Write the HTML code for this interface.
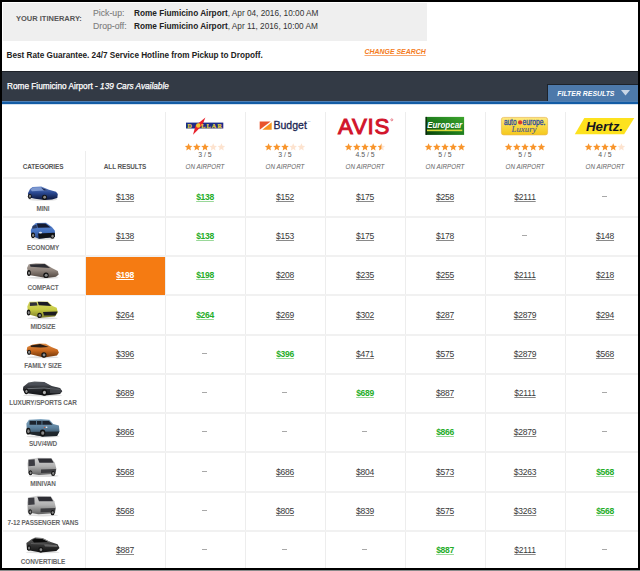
<!DOCTYPE html><html><head><meta charset="utf-8"><style>html,body{margin:0;padding:0;width:640px;height:571px;overflow:hidden;background:#fff}</style></head><body><div style="position:absolute;left:0px;top:0px;width:640px;height:571px;background:#8a8a8a;"></div>
<div style="position:absolute;left:0px;top:0px;width:640px;height:570px;background:#000;"></div>
<div style="position:absolute;left:2px;top:2px;width:636px;height:566px;background:#fff;"></div>
<div style="position:absolute;left:3px;top:3px;width:424px;height:37.5px;background:#efefef;"></div>
<div style="position:absolute;left:16.00px;top:15.00px;font:normal bold 7.5px/1 'Liberation Sans', sans-serif;color:#555;white-space:nowrap;">YOUR ITINERARY:</div>
<div style="position:absolute;left:93.00px;top:8.98px;font:normal normal 8.7px/1 'Liberation Sans', sans-serif;color:#7c7c7c;white-space:nowrap;-webkit-text-stroke:0.1px #7c7c7c;">Pick-up:</div>
<div style="position:absolute;left:93.00px;top:21.98px;font:normal normal 8.7px/1 'Liberation Sans', sans-serif;color:#7c7c7c;white-space:nowrap;-webkit-text-stroke:0.1px #7c7c7c;">Drop-off:</div>
<div style="position:absolute;left:134.00px;top:9.74px;font:normal normal 8.25px/1 'Liberation Sans', sans-serif;color:#333;white-space:nowrap;"><b style="color:#222">Rome Fiumicino Airport</b>, Apr 04, 2016, 10:00 AM</div>
<div style="position:absolute;left:134.00px;top:22.74px;font:normal normal 8.25px/1 'Liberation Sans', sans-serif;color:#333;white-space:nowrap;"><b style="color:#222">Rome Fiumicino Airport</b>, Apr 11, 2016, 10:00 AM</div>
<div style="position:absolute;left:6.50px;top:51.76px;font:normal bold 8.2px/1 'Liberation Sans', sans-serif;color:#222;white-space:nowrap;">Best Rate Guarantee. 24/7 Service Hotline from Pickup to Dropoff.</div>
<div style="position:absolute;left:364.50px;top:48.79px;font:italic bold 6.95px/1 'Liberation Sans', sans-serif;color:#f47b20;white-space:nowrap;text-decoration:underline;text-decoration-color:#f8a870;">CHANGE SEARCH</div>
<div style="position:absolute;left:2px;top:71px;width:636px;height:30px;background:#333a45;"></div>
<div style="position:absolute;left:2px;top:71px;width:636px;height:1px;background:#1e2229;"></div>
<div style="position:absolute;left:2px;top:101px;width:636px;height:1px;background:#4f80b5;"></div>
<div style="position:absolute;left:2px;top:102px;width:636px;height:2px;background:#135ca5;"></div>
<div style="position:absolute;left:2px;top:104px;width:636px;height:1px;background:#d5e2ef;"></div>
<div style="position:absolute;left:7.00px;top:82.74px;font:normal normal 8.25px/1 'Liberation Sans', sans-serif;color:#fff;white-space:nowrap;-webkit-text-stroke:0.25px #fff;">Rome Fiumicino Airport - <i>139 Cars Available</i></div>
<div style="position:absolute;left:548px;top:85px;width:90px;height:16px;background:#4d79aa;"></div>
<div style="position:absolute;left:547px;top:85px;width:1px;height:16px;background:#1d232b;"></div>
<div style="position:absolute;left:547px;top:84px;width:91px;height:1px;background:#1d2229;"></div>
<div style="position:absolute;left:557.30px;top:90.81px;font:italic bold 6.9px/1 'Liberation Sans', sans-serif;color:#fff;white-space:nowrap;">FILTER RESULTS</div>
<svg style="position:absolute;left:621px;top:90px" width="9" height="6"><polygon points="0,0 9,0 4.5,5.5" fill="#c9d6e6"/></svg>
<div style="position:absolute;left:85px;top:151px;width:1px;height:417px;background:#ededed;"></div>
<div style="position:absolute;left:165px;top:111.5px;width:1px;height:456.5px;background:#ededed;"></div>
<div style="position:absolute;left:245px;top:111.5px;width:1px;height:456.5px;background:#ededed;"></div>
<div style="position:absolute;left:325px;top:111.5px;width:1px;height:456.5px;background:#ededed;"></div>
<div style="position:absolute;left:405px;top:111.5px;width:1px;height:456.5px;background:#ededed;"></div>
<div style="position:absolute;left:485px;top:111.5px;width:1px;height:456.5px;background:#ededed;"></div>
<div style="position:absolute;left:565px;top:111.5px;width:1px;height:456.5px;background:#ededed;"></div>
<div style="position:absolute;left:3px;top:177px;width:635px;height:2px;background:#f1f1f1;"></div>
<div style="position:absolute;left:3px;top:216px;width:635px;height:2px;background:#f1f1f1;"></div>
<div style="position:absolute;left:3px;top:255px;width:635px;height:2px;background:#f1f1f1;"></div>
<div style="position:absolute;left:3px;top:294px;width:635px;height:2px;background:#f1f1f1;"></div>
<div style="position:absolute;left:3px;top:334px;width:635px;height:2px;background:#f1f1f1;"></div>
<div style="position:absolute;left:3px;top:373px;width:635px;height:2px;background:#f1f1f1;"></div>
<div style="position:absolute;left:3px;top:412px;width:635px;height:2px;background:#f1f1f1;"></div>
<div style="position:absolute;left:3px;top:451px;width:635px;height:2px;background:#f1f1f1;"></div>
<div style="position:absolute;left:3px;top:491px;width:635px;height:2px;background:#f1f1f1;"></div>
<div style="position:absolute;left:3px;top:530px;width:635px;height:2px;background:#f1f1f1;"></div>
<div style="position:absolute;left:-17.00px;width:120px;text-align:center;top:163.99px;font:normal bold 6.4px/1 'Liberation Sans', sans-serif;color:#555;white-space:nowrap;letter-spacing:-0.12px;">CATEGORIES</div>
<div style="position:absolute;left:65.00px;width:120px;text-align:center;top:163.99px;font:normal bold 6.4px/1 'Liberation Sans', sans-serif;color:#555;white-space:nowrap;letter-spacing:-0.1px;">ALL RESULTS</div>
<div style="position:absolute;left:145.00px;width:120px;text-align:center;top:151.81px;font:normal normal 6.9px/1 'Liberation Sans', sans-serif;color:#5a5a5a;white-space:nowrap;">3 / 5</div>
<div style="position:absolute;left:145.00px;width:120px;text-align:center;top:164.02px;font:italic normal 6.3px/1 'Liberation Sans', sans-serif;color:#666;white-space:nowrap;">ON AIRPORT</div>
<div style="position:absolute;left:225.00px;width:120px;text-align:center;top:151.81px;font:normal normal 6.9px/1 'Liberation Sans', sans-serif;color:#5a5a5a;white-space:nowrap;">3 / 5</div>
<div style="position:absolute;left:225.00px;width:120px;text-align:center;top:164.02px;font:italic normal 6.3px/1 'Liberation Sans', sans-serif;color:#666;white-space:nowrap;">ON AIRPORT</div>
<div style="position:absolute;left:305.00px;width:120px;text-align:center;top:151.81px;font:normal normal 6.9px/1 'Liberation Sans', sans-serif;color:#5a5a5a;white-space:nowrap;">4.5 / 5</div>
<div style="position:absolute;left:305.00px;width:120px;text-align:center;top:164.02px;font:italic normal 6.3px/1 'Liberation Sans', sans-serif;color:#666;white-space:nowrap;">ON AIRPORT</div>
<div style="position:absolute;left:385.00px;width:120px;text-align:center;top:151.81px;font:normal normal 6.9px/1 'Liberation Sans', sans-serif;color:#5a5a5a;white-space:nowrap;">5 / 5</div>
<div style="position:absolute;left:385.00px;width:120px;text-align:center;top:164.02px;font:italic normal 6.3px/1 'Liberation Sans', sans-serif;color:#666;white-space:nowrap;">ON AIRPORT</div>
<div style="position:absolute;left:465.00px;width:120px;text-align:center;top:151.81px;font:normal normal 6.9px/1 'Liberation Sans', sans-serif;color:#5a5a5a;white-space:nowrap;">5 / 5</div>
<div style="position:absolute;left:465.00px;width:120px;text-align:center;top:164.02px;font:italic normal 6.3px/1 'Liberation Sans', sans-serif;color:#666;white-space:nowrap;">ON AIRPORT</div>
<div style="position:absolute;left:545.00px;width:120px;text-align:center;top:151.81px;font:normal normal 6.9px/1 'Liberation Sans', sans-serif;color:#5a5a5a;white-space:nowrap;">4 / 5</div>
<div style="position:absolute;left:545.00px;width:120px;text-align:center;top:164.02px;font:italic normal 6.3px/1 'Liberation Sans', sans-serif;color:#666;white-space:nowrap;">ON AIRPORT</div>
<svg style="position:absolute;left:0;top:0" width="640" height="571"><polygon points="188.60,143.25 189.69,145.70 192.36,145.98 190.36,147.77 190.92,150.40 188.60,149.05 186.28,150.40 186.84,147.77 184.84,145.98 187.51,145.70" fill="#f8952c"/><polygon points="196.80,143.25 197.89,145.70 200.56,145.98 198.56,147.77 199.12,150.40 196.80,149.05 194.48,150.40 195.04,147.77 193.04,145.98 195.71,145.70" fill="#f8952c"/><polygon points="205.00,143.25 206.09,145.70 208.76,145.98 206.76,147.77 207.32,150.40 205.00,149.05 202.68,150.40 203.24,147.77 201.24,145.98 203.91,145.70" fill="#f8952c"/><polygon points="213.20,143.25 214.29,145.70 216.96,145.98 214.96,147.77 215.52,150.40 213.20,149.05 210.88,150.40 211.44,147.77 209.44,145.98 212.11,145.70" fill="#fde3cf"/><polygon points="221.40,143.25 222.49,145.70 225.16,145.98 223.16,147.77 223.72,150.40 221.40,149.05 219.08,150.40 219.64,147.77 217.64,145.98 220.31,145.70" fill="#fde3cf"/><polygon points="268.60,143.25 269.69,145.70 272.36,145.98 270.36,147.77 270.92,150.40 268.60,149.05 266.28,150.40 266.84,147.77 264.84,145.98 267.51,145.70" fill="#f8952c"/><polygon points="276.80,143.25 277.89,145.70 280.56,145.98 278.56,147.77 279.12,150.40 276.80,149.05 274.48,150.40 275.04,147.77 273.04,145.98 275.71,145.70" fill="#f8952c"/><polygon points="285.00,143.25 286.09,145.70 288.76,145.98 286.76,147.77 287.32,150.40 285.00,149.05 282.68,150.40 283.24,147.77 281.24,145.98 283.91,145.70" fill="#f8952c"/><polygon points="293.20,143.25 294.29,145.70 296.96,145.98 294.96,147.77 295.52,150.40 293.20,149.05 290.88,150.40 291.44,147.77 289.44,145.98 292.11,145.70" fill="#fde3cf"/><polygon points="301.40,143.25 302.49,145.70 305.16,145.98 303.16,147.77 303.72,150.40 301.40,149.05 299.08,150.40 299.64,147.77 297.64,145.98 300.31,145.70" fill="#fde3cf"/><polygon points="348.60,143.25 349.69,145.70 352.36,145.98 350.36,147.77 350.92,150.40 348.60,149.05 346.28,150.40 346.84,147.77 344.84,145.98 347.51,145.70" fill="#f8952c"/><polygon points="356.80,143.25 357.89,145.70 360.56,145.98 358.56,147.77 359.12,150.40 356.80,149.05 354.48,150.40 355.04,147.77 353.04,145.98 355.71,145.70" fill="#f8952c"/><polygon points="365.00,143.25 366.09,145.70 368.76,145.98 366.76,147.77 367.32,150.40 365.00,149.05 362.68,150.40 363.24,147.77 361.24,145.98 363.91,145.70" fill="#f8952c"/><polygon points="373.20,143.25 374.29,145.70 376.96,145.98 374.96,147.77 375.52,150.40 373.20,149.05 370.88,150.40 371.44,147.77 369.44,145.98 372.11,145.70" fill="#f8952c"/><polygon points="381.40,143.25 382.49,145.70 385.16,145.98 383.16,147.77 383.72,150.40 381.40,149.05 379.08,150.40 379.64,147.77 377.64,145.98 380.31,145.70" fill="#fde3cf"/><clipPath id="half365"><rect x="377.40000000000003" y="140" width="4" height="12"/></clipPath><polygon points="381.40,143.25 382.49,145.70 385.16,145.98 383.16,147.77 383.72,150.40 381.40,149.05 379.08,150.40 379.64,147.77 377.64,145.98 380.31,145.70" fill="#f8952c" clip-path="url(#half365)"/><polygon points="428.60,143.25 429.69,145.70 432.36,145.98 430.36,147.77 430.92,150.40 428.60,149.05 426.28,150.40 426.84,147.77 424.84,145.98 427.51,145.70" fill="#f8952c"/><polygon points="436.80,143.25 437.89,145.70 440.56,145.98 438.56,147.77 439.12,150.40 436.80,149.05 434.48,150.40 435.04,147.77 433.04,145.98 435.71,145.70" fill="#f8952c"/><polygon points="445.00,143.25 446.09,145.70 448.76,145.98 446.76,147.77 447.32,150.40 445.00,149.05 442.68,150.40 443.24,147.77 441.24,145.98 443.91,145.70" fill="#f8952c"/><polygon points="453.20,143.25 454.29,145.70 456.96,145.98 454.96,147.77 455.52,150.40 453.20,149.05 450.88,150.40 451.44,147.77 449.44,145.98 452.11,145.70" fill="#f8952c"/><polygon points="461.40,143.25 462.49,145.70 465.16,145.98 463.16,147.77 463.72,150.40 461.40,149.05 459.08,150.40 459.64,147.77 457.64,145.98 460.31,145.70" fill="#f8952c"/><polygon points="508.60,143.25 509.69,145.70 512.36,145.98 510.36,147.77 510.92,150.40 508.60,149.05 506.28,150.40 506.84,147.77 504.84,145.98 507.51,145.70" fill="#f8952c"/><polygon points="516.80,143.25 517.89,145.70 520.56,145.98 518.56,147.77 519.12,150.40 516.80,149.05 514.48,150.40 515.04,147.77 513.04,145.98 515.71,145.70" fill="#f8952c"/><polygon points="525.00,143.25 526.09,145.70 528.76,145.98 526.76,147.77 527.32,150.40 525.00,149.05 522.68,150.40 523.24,147.77 521.24,145.98 523.91,145.70" fill="#f8952c"/><polygon points="533.20,143.25 534.29,145.70 536.96,145.98 534.96,147.77 535.52,150.40 533.20,149.05 530.88,150.40 531.44,147.77 529.44,145.98 532.11,145.70" fill="#f8952c"/><polygon points="541.40,143.25 542.49,145.70 545.16,145.98 543.16,147.77 543.72,150.40 541.40,149.05 539.08,150.40 539.64,147.77 537.64,145.98 540.31,145.70" fill="#f8952c"/><polygon points="588.60,143.25 589.69,145.70 592.36,145.98 590.36,147.77 590.92,150.40 588.60,149.05 586.28,150.40 586.84,147.77 584.84,145.98 587.51,145.70" fill="#f8952c"/><polygon points="596.80,143.25 597.89,145.70 600.56,145.98 598.56,147.77 599.12,150.40 596.80,149.05 594.48,150.40 595.04,147.77 593.04,145.98 595.71,145.70" fill="#f8952c"/><polygon points="605.00,143.25 606.09,145.70 608.76,145.98 606.76,147.77 607.32,150.40 605.00,149.05 602.68,150.40 603.24,147.77 601.24,145.98 603.91,145.70" fill="#f8952c"/><polygon points="613.20,143.25 614.29,145.70 616.96,145.98 614.96,147.77 615.52,150.40 613.20,149.05 610.88,150.40 611.44,147.77 609.44,145.98 612.11,145.70" fill="#f8952c"/><polygon points="621.40,143.25 622.49,145.70 625.16,145.98 623.16,147.77 623.72,150.40 621.40,149.05 619.08,150.40 619.64,147.77 617.64,145.98 620.31,145.70" fill="#fde3cf"/><rect x="186" y="122.6" width="37.3" height="5.9" fill="#1b2d8a"/><polygon points="205.4,117.6 202.2,125.5 193,134.7 195.6,125.5" fill="#e8222b"/><text x="187.4" y="127.6" font-family="Liberation Serif" font-weight="bold" font-size="6" fill="#e6cf3c" stroke="#e6cf3c" stroke-width="0.25">D</text><text x="201.3" y="127.6" font-family="Liberation Serif" font-weight="bold" font-size="6" fill="#e6cf3c" stroke="#e6cf3c" stroke-width="0.25" textLength="20.5" lengthAdjust="spacing">LLAR</text><circle cx="198.2" cy="125.5" r="2.2" fill="#f2c832"/><polygon points="259.7,121.4 270.6,121.4 259.7,129.7" fill="#e8542b"/><polygon points="271.7,122.3 271.7,129.7 262.3,129.7" fill="#f7931e"/><text x="273.5" y="129" font-family="Liberation Sans" font-size="10.4" fill="#1b2652" stroke="#1b2652" stroke-width="0.3" textLength="33.3" lengthAdjust="spacingAndGlyphs">Budget</text><text x="307.6" y="122.3" font-family="Liberation Sans" font-size="2" fill="#8090a8">TM</text><text x="338" y="134.2" font-family="Liberation Sans" font-size="22.3" fill="#d2142b" stroke="#d2142b" stroke-width="1.0" textLength="51.3" lengthAdjust="spacing">AVIS</text><circle cx="391.8" cy="119.8" r="1" fill="none" stroke="#d2142b" stroke-width="0.5"/></svg>
<svg style="position:absolute;left:0;top:0" width="640" height="571"><defs><linearGradient id="eg" x1="0" y1="1" x2="1" y2="0"><stop offset="0" stop-color="#063d08"/><stop offset="0.45" stop-color="#1c7a1c"/><stop offset="1" stop-color="#3da52c"/></linearGradient><linearGradient id="ag" x1="0" y1="0" x2="0" y2="1"><stop offset="0" stop-color="#fde982"/><stop offset="0.45" stop-color="#f9da48"/><stop offset="1" stop-color="#f5c81c"/></linearGradient></defs><rect x="425.6" y="116.9" width="38.5" height="18" fill="url(#eg)"/><rect x="425.6" y="116.9" width="1.2" height="18" fill="#0a200a"/><rect x="427" y="129.6" width="35.3" height="1.6" fill="#d9d83a"/><text x="427.2" y="127.7" font-family="Liberation Sans" font-style="italic" font-weight="bold" font-size="9.4" fill="#fff" textLength="35" lengthAdjust="spacingAndGlyphs">Europcar</text><rect x="501.4" y="117.4" width="46.2" height="17.5" rx="2.2" fill="url(#ag)" stroke="#eab850" stroke-width="0.7"/><text x="503.9" y="124.6" font-family="Liberation Sans" font-size="8.2" fill="#2a4a9e" stroke="#2a4a9e" stroke-width="0.3" textLength="12.6" lengthAdjust="spacingAndGlyphs">auto</text><text x="522.6" y="124.6" font-family="Liberation Sans" font-size="8.2" fill="#2a4a9e" stroke="#2a4a9e" stroke-width="0.3" textLength="22.8" lengthAdjust="spacingAndGlyphs">europe.</text><circle cx="520.1" cy="122.4" r="2.1" fill="#d83a2b"/><text x="511.5" y="132.2" font-family="Liberation Serif" font-style="italic" font-size="8.2" fill="#4a5a92" stroke="#4a5a92" stroke-width="0.1" textLength="25" lengthAdjust="spacingAndGlyphs">Luxury</text><polygon points="584.3,118 634.3,118 624.2,134.2 574.8,134.2" fill="#fde21e"/><text x="586" y="131" font-family="Liberation Sans" font-style="italic" font-weight="bold" font-size="13.4" fill="#15151f" textLength="37" lengthAdjust="spacingAndGlyphs">Hertz.</text></svg>
<div style="position:absolute;left:65.00px;width:120px;text-align:center;top:193.00px;font:normal normal 8.5px/1 'Liberation Sans', sans-serif;color:#383838;white-space:nowrap;text-decoration:underline;text-decoration-color:#8a8a8a;letter-spacing:-0.2px;">$138</div>
<div style="position:absolute;left:145.00px;width:120px;text-align:center;top:193.00px;font:normal bold 8.5px/1 'Liberation Sans', sans-serif;color:#24ad28;white-space:nowrap;text-decoration:underline;text-decoration-color:#9ad89a;letter-spacing:-0.3px;">$138</div>
<div style="position:absolute;left:225.00px;width:120px;text-align:center;top:193.00px;font:normal normal 8.5px/1 'Liberation Sans', sans-serif;color:#383838;white-space:nowrap;text-decoration:underline;text-decoration-color:#8a8a8a;letter-spacing:-0.2px;">$152</div>
<div style="position:absolute;left:305.00px;width:120px;text-align:center;top:193.00px;font:normal normal 8.5px/1 'Liberation Sans', sans-serif;color:#383838;white-space:nowrap;text-decoration:underline;text-decoration-color:#8a8a8a;letter-spacing:-0.2px;">$175</div>
<div style="position:absolute;left:385.00px;width:120px;text-align:center;top:193.00px;font:normal normal 8.5px/1 'Liberation Sans', sans-serif;color:#383838;white-space:nowrap;text-decoration:underline;text-decoration-color:#8a8a8a;letter-spacing:-0.2px;">$258</div>
<div style="position:absolute;left:465.00px;width:120px;text-align:center;top:193.00px;font:normal normal 8.5px/1 'Liberation Sans', sans-serif;color:#383838;white-space:nowrap;text-decoration:underline;text-decoration-color:#8a8a8a;letter-spacing:-0.2px;">$2111</div>
<div style="position:absolute;left:602.4px;top:196px;width:5px;height:1px;background:#a8a8a8;"></div>
<div style="position:absolute;left:-17.00px;width:120px;text-align:center;top:205.99px;font:normal bold 6.4px/1 'Liberation Sans', sans-serif;color:#666;white-space:nowrap;letter-spacing:-0.13px;">MINI</div>
<div style="position:absolute;left:65.00px;width:120px;text-align:center;top:232.00px;font:normal normal 8.5px/1 'Liberation Sans', sans-serif;color:#383838;white-space:nowrap;text-decoration:underline;text-decoration-color:#8a8a8a;letter-spacing:-0.2px;">$138</div>
<div style="position:absolute;left:145.00px;width:120px;text-align:center;top:232.00px;font:normal bold 8.5px/1 'Liberation Sans', sans-serif;color:#24ad28;white-space:nowrap;text-decoration:underline;text-decoration-color:#9ad89a;letter-spacing:-0.3px;">$138</div>
<div style="position:absolute;left:225.00px;width:120px;text-align:center;top:232.00px;font:normal normal 8.5px/1 'Liberation Sans', sans-serif;color:#383838;white-space:nowrap;text-decoration:underline;text-decoration-color:#8a8a8a;letter-spacing:-0.2px;">$153</div>
<div style="position:absolute;left:305.00px;width:120px;text-align:center;top:232.00px;font:normal normal 8.5px/1 'Liberation Sans', sans-serif;color:#383838;white-space:nowrap;text-decoration:underline;text-decoration-color:#8a8a8a;letter-spacing:-0.2px;">$175</div>
<div style="position:absolute;left:385.00px;width:120px;text-align:center;top:232.00px;font:normal normal 8.5px/1 'Liberation Sans', sans-serif;color:#383838;white-space:nowrap;text-decoration:underline;text-decoration-color:#8a8a8a;letter-spacing:-0.2px;">$178</div>
<div style="position:absolute;left:522.4px;top:235px;width:5px;height:1px;background:#a8a8a8;"></div>
<div style="position:absolute;left:545.00px;width:120px;text-align:center;top:232.00px;font:normal normal 8.5px/1 'Liberation Sans', sans-serif;color:#383838;white-space:nowrap;text-decoration:underline;text-decoration-color:#8a8a8a;letter-spacing:-0.2px;">$148</div>
<div style="position:absolute;left:-17.00px;width:120px;text-align:center;top:244.99px;font:normal bold 6.4px/1 'Liberation Sans', sans-serif;color:#666;white-space:nowrap;letter-spacing:-0.13px;">ECONOMY</div>
<div style="position:absolute;left:86px;top:257px;width:79px;height:38px;background:#f57b12;"></div>
<div style="position:absolute;left:65.00px;width:120px;text-align:center;top:271.00px;font:normal bold 8.5px/1 'Liberation Sans', sans-serif;color:#fff;white-space:nowrap;text-decoration:underline;letter-spacing:-0.3px;">$198</div>
<div style="position:absolute;left:145.00px;width:120px;text-align:center;top:271.00px;font:normal bold 8.5px/1 'Liberation Sans', sans-serif;color:#24ad28;white-space:nowrap;text-decoration:underline;text-decoration-color:#9ad89a;letter-spacing:-0.3px;">$198</div>
<div style="position:absolute;left:225.00px;width:120px;text-align:center;top:271.00px;font:normal normal 8.5px/1 'Liberation Sans', sans-serif;color:#383838;white-space:nowrap;text-decoration:underline;text-decoration-color:#8a8a8a;letter-spacing:-0.2px;">$208</div>
<div style="position:absolute;left:305.00px;width:120px;text-align:center;top:271.00px;font:normal normal 8.5px/1 'Liberation Sans', sans-serif;color:#383838;white-space:nowrap;text-decoration:underline;text-decoration-color:#8a8a8a;letter-spacing:-0.2px;">$235</div>
<div style="position:absolute;left:385.00px;width:120px;text-align:center;top:271.00px;font:normal normal 8.5px/1 'Liberation Sans', sans-serif;color:#383838;white-space:nowrap;text-decoration:underline;text-decoration-color:#8a8a8a;letter-spacing:-0.2px;">$255</div>
<div style="position:absolute;left:465.00px;width:120px;text-align:center;top:271.00px;font:normal normal 8.5px/1 'Liberation Sans', sans-serif;color:#383838;white-space:nowrap;text-decoration:underline;text-decoration-color:#8a8a8a;letter-spacing:-0.2px;">$2111</div>
<div style="position:absolute;left:545.00px;width:120px;text-align:center;top:271.00px;font:normal normal 8.5px/1 'Liberation Sans', sans-serif;color:#383838;white-space:nowrap;text-decoration:underline;text-decoration-color:#8a8a8a;letter-spacing:-0.2px;">$218</div>
<div style="position:absolute;left:-17.00px;width:120px;text-align:center;top:284.99px;font:normal bold 6.4px/1 'Liberation Sans', sans-serif;color:#666;white-space:nowrap;letter-spacing:-0.13px;">COMPACT</div>
<div style="position:absolute;left:65.00px;width:120px;text-align:center;top:311.00px;font:normal normal 8.5px/1 'Liberation Sans', sans-serif;color:#383838;white-space:nowrap;text-decoration:underline;text-decoration-color:#8a8a8a;letter-spacing:-0.2px;">$264</div>
<div style="position:absolute;left:145.00px;width:120px;text-align:center;top:311.00px;font:normal bold 8.5px/1 'Liberation Sans', sans-serif;color:#24ad28;white-space:nowrap;text-decoration:underline;text-decoration-color:#9ad89a;letter-spacing:-0.3px;">$264</div>
<div style="position:absolute;left:225.00px;width:120px;text-align:center;top:311.00px;font:normal normal 8.5px/1 'Liberation Sans', sans-serif;color:#383838;white-space:nowrap;text-decoration:underline;text-decoration-color:#8a8a8a;letter-spacing:-0.2px;">$269</div>
<div style="position:absolute;left:305.00px;width:120px;text-align:center;top:311.00px;font:normal normal 8.5px/1 'Liberation Sans', sans-serif;color:#383838;white-space:nowrap;text-decoration:underline;text-decoration-color:#8a8a8a;letter-spacing:-0.2px;">$302</div>
<div style="position:absolute;left:385.00px;width:120px;text-align:center;top:311.00px;font:normal normal 8.5px/1 'Liberation Sans', sans-serif;color:#383838;white-space:nowrap;text-decoration:underline;text-decoration-color:#8a8a8a;letter-spacing:-0.2px;">$287</div>
<div style="position:absolute;left:465.00px;width:120px;text-align:center;top:311.00px;font:normal normal 8.5px/1 'Liberation Sans', sans-serif;color:#383838;white-space:nowrap;text-decoration:underline;text-decoration-color:#8a8a8a;letter-spacing:-0.2px;">$2879</div>
<div style="position:absolute;left:545.00px;width:120px;text-align:center;top:311.00px;font:normal normal 8.5px/1 'Liberation Sans', sans-serif;color:#383838;white-space:nowrap;text-decoration:underline;text-decoration-color:#8a8a8a;letter-spacing:-0.2px;">$294</div>
<div style="position:absolute;left:-17.00px;width:120px;text-align:center;top:323.99px;font:normal bold 6.4px/1 'Liberation Sans', sans-serif;color:#666;white-space:nowrap;letter-spacing:-0.13px;">MIDSIZE</div>
<div style="position:absolute;left:65.00px;width:120px;text-align:center;top:350.00px;font:normal normal 8.5px/1 'Liberation Sans', sans-serif;color:#383838;white-space:nowrap;text-decoration:underline;text-decoration-color:#8a8a8a;letter-spacing:-0.2px;">$396</div>
<div style="position:absolute;left:202.4px;top:353px;width:5px;height:1px;background:#a8a8a8;"></div>
<div style="position:absolute;left:225.00px;width:120px;text-align:center;top:350.00px;font:normal bold 8.5px/1 'Liberation Sans', sans-serif;color:#24ad28;white-space:nowrap;text-decoration:underline;text-decoration-color:#9ad89a;letter-spacing:-0.3px;">$396</div>
<div style="position:absolute;left:305.00px;width:120px;text-align:center;top:350.00px;font:normal normal 8.5px/1 'Liberation Sans', sans-serif;color:#383838;white-space:nowrap;text-decoration:underline;text-decoration-color:#8a8a8a;letter-spacing:-0.2px;">$471</div>
<div style="position:absolute;left:385.00px;width:120px;text-align:center;top:350.00px;font:normal normal 8.5px/1 'Liberation Sans', sans-serif;color:#383838;white-space:nowrap;text-decoration:underline;text-decoration-color:#8a8a8a;letter-spacing:-0.2px;">$575</div>
<div style="position:absolute;left:465.00px;width:120px;text-align:center;top:350.00px;font:normal normal 8.5px/1 'Liberation Sans', sans-serif;color:#383838;white-space:nowrap;text-decoration:underline;text-decoration-color:#8a8a8a;letter-spacing:-0.2px;">$2879</div>
<div style="position:absolute;left:545.00px;width:120px;text-align:center;top:350.00px;font:normal normal 8.5px/1 'Liberation Sans', sans-serif;color:#383838;white-space:nowrap;text-decoration:underline;text-decoration-color:#8a8a8a;letter-spacing:-0.2px;">$568</div>
<div style="position:absolute;left:-17.00px;width:120px;text-align:center;top:362.99px;font:normal bold 6.4px/1 'Liberation Sans', sans-serif;color:#666;white-space:nowrap;letter-spacing:-0.13px;">FAMILY SIZE</div>
<div style="position:absolute;left:65.00px;width:120px;text-align:center;top:389.00px;font:normal normal 8.5px/1 'Liberation Sans', sans-serif;color:#383838;white-space:nowrap;text-decoration:underline;text-decoration-color:#8a8a8a;letter-spacing:-0.2px;">$689</div>
<div style="position:absolute;left:202.4px;top:392px;width:5px;height:1px;background:#a8a8a8;"></div>
<div style="position:absolute;left:282.4px;top:392px;width:5px;height:1px;background:#a8a8a8;"></div>
<div style="position:absolute;left:305.00px;width:120px;text-align:center;top:389.00px;font:normal bold 8.5px/1 'Liberation Sans', sans-serif;color:#24ad28;white-space:nowrap;text-decoration:underline;text-decoration-color:#9ad89a;letter-spacing:-0.3px;">$689</div>
<div style="position:absolute;left:385.00px;width:120px;text-align:center;top:389.00px;font:normal normal 8.5px/1 'Liberation Sans', sans-serif;color:#383838;white-space:nowrap;text-decoration:underline;text-decoration-color:#8a8a8a;letter-spacing:-0.2px;">$887</div>
<div style="position:absolute;left:465.00px;width:120px;text-align:center;top:389.00px;font:normal normal 8.5px/1 'Liberation Sans', sans-serif;color:#383838;white-space:nowrap;text-decoration:underline;text-decoration-color:#8a8a8a;letter-spacing:-0.2px;">$2111</div>
<div style="position:absolute;left:602.4px;top:392px;width:5px;height:1px;background:#a8a8a8;"></div>
<div style="position:absolute;left:-17.00px;width:120px;text-align:center;top:399.99px;font:normal bold 6.4px/1 'Liberation Sans', sans-serif;color:#666;white-space:nowrap;letter-spacing:-0.13px;">LUXURY/SPORTS CAR</div>
<div style="position:absolute;left:65.00px;width:120px;text-align:center;top:428.00px;font:normal normal 8.5px/1 'Liberation Sans', sans-serif;color:#383838;white-space:nowrap;text-decoration:underline;text-decoration-color:#8a8a8a;letter-spacing:-0.2px;">$866</div>
<div style="position:absolute;left:202.4px;top:431px;width:5px;height:1px;background:#a8a8a8;"></div>
<div style="position:absolute;left:282.4px;top:431px;width:5px;height:1px;background:#a8a8a8;"></div>
<div style="position:absolute;left:362.4px;top:431px;width:5px;height:1px;background:#a8a8a8;"></div>
<div style="position:absolute;left:385.00px;width:120px;text-align:center;top:428.00px;font:normal bold 8.5px/1 'Liberation Sans', sans-serif;color:#24ad28;white-space:nowrap;text-decoration:underline;text-decoration-color:#9ad89a;letter-spacing:-0.3px;">$866</div>
<div style="position:absolute;left:465.00px;width:120px;text-align:center;top:428.00px;font:normal normal 8.5px/1 'Liberation Sans', sans-serif;color:#383838;white-space:nowrap;text-decoration:underline;text-decoration-color:#8a8a8a;letter-spacing:-0.2px;">$2879</div>
<div style="position:absolute;left:602.4px;top:431px;width:5px;height:1px;background:#a8a8a8;"></div>
<div style="position:absolute;left:-17.00px;width:120px;text-align:center;top:440.99px;font:normal bold 6.4px/1 'Liberation Sans', sans-serif;color:#666;white-space:nowrap;letter-spacing:-0.13px;">SUV/4WD</div>
<div style="position:absolute;left:65.00px;width:120px;text-align:center;top:468.00px;font:normal normal 8.5px/1 'Liberation Sans', sans-serif;color:#383838;white-space:nowrap;text-decoration:underline;text-decoration-color:#8a8a8a;letter-spacing:-0.2px;">$568</div>
<div style="position:absolute;left:202.4px;top:471px;width:5px;height:1px;background:#a8a8a8;"></div>
<div style="position:absolute;left:225.00px;width:120px;text-align:center;top:468.00px;font:normal normal 8.5px/1 'Liberation Sans', sans-serif;color:#383838;white-space:nowrap;text-decoration:underline;text-decoration-color:#8a8a8a;letter-spacing:-0.2px;">$686</div>
<div style="position:absolute;left:305.00px;width:120px;text-align:center;top:468.00px;font:normal normal 8.5px/1 'Liberation Sans', sans-serif;color:#383838;white-space:nowrap;text-decoration:underline;text-decoration-color:#8a8a8a;letter-spacing:-0.2px;">$804</div>
<div style="position:absolute;left:385.00px;width:120px;text-align:center;top:468.00px;font:normal normal 8.5px/1 'Liberation Sans', sans-serif;color:#383838;white-space:nowrap;text-decoration:underline;text-decoration-color:#8a8a8a;letter-spacing:-0.2px;">$573</div>
<div style="position:absolute;left:465.00px;width:120px;text-align:center;top:468.00px;font:normal normal 8.5px/1 'Liberation Sans', sans-serif;color:#383838;white-space:nowrap;text-decoration:underline;text-decoration-color:#8a8a8a;letter-spacing:-0.2px;">$3263</div>
<div style="position:absolute;left:545.00px;width:120px;text-align:center;top:468.00px;font:normal bold 8.5px/1 'Liberation Sans', sans-serif;color:#24ad28;white-space:nowrap;text-decoration:underline;text-decoration-color:#9ad89a;letter-spacing:-0.3px;">$568</div>
<div style="position:absolute;left:-17.00px;width:120px;text-align:center;top:480.99px;font:normal bold 6.4px/1 'Liberation Sans', sans-serif;color:#666;white-space:nowrap;letter-spacing:-0.13px;">MINIVAN</div>
<div style="position:absolute;left:65.00px;width:120px;text-align:center;top:507.00px;font:normal normal 8.5px/1 'Liberation Sans', sans-serif;color:#383838;white-space:nowrap;text-decoration:underline;text-decoration-color:#8a8a8a;letter-spacing:-0.2px;">$568</div>
<div style="position:absolute;left:202.4px;top:510px;width:5px;height:1px;background:#a8a8a8;"></div>
<div style="position:absolute;left:225.00px;width:120px;text-align:center;top:507.00px;font:normal normal 8.5px/1 'Liberation Sans', sans-serif;color:#383838;white-space:nowrap;text-decoration:underline;text-decoration-color:#8a8a8a;letter-spacing:-0.2px;">$805</div>
<div style="position:absolute;left:305.00px;width:120px;text-align:center;top:507.00px;font:normal normal 8.5px/1 'Liberation Sans', sans-serif;color:#383838;white-space:nowrap;text-decoration:underline;text-decoration-color:#8a8a8a;letter-spacing:-0.2px;">$839</div>
<div style="position:absolute;left:385.00px;width:120px;text-align:center;top:507.00px;font:normal normal 8.5px/1 'Liberation Sans', sans-serif;color:#383838;white-space:nowrap;text-decoration:underline;text-decoration-color:#8a8a8a;letter-spacing:-0.2px;">$575</div>
<div style="position:absolute;left:465.00px;width:120px;text-align:center;top:507.00px;font:normal normal 8.5px/1 'Liberation Sans', sans-serif;color:#383838;white-space:nowrap;text-decoration:underline;text-decoration-color:#8a8a8a;letter-spacing:-0.2px;">$3263</div>
<div style="position:absolute;left:545.00px;width:120px;text-align:center;top:507.00px;font:normal bold 8.5px/1 'Liberation Sans', sans-serif;color:#24ad28;white-space:nowrap;text-decoration:underline;text-decoration-color:#9ad89a;letter-spacing:-0.3px;">$568</div>
<div style="position:absolute;left:-17.00px;width:120px;text-align:center;top:519.98px;font:normal bold 6.4px/1 'Liberation Sans', sans-serif;color:#666;white-space:nowrap;letter-spacing:-0.13px;">7-12 PASSENGER VANS</div>
<div style="position:absolute;left:65.00px;width:120px;text-align:center;top:546.00px;font:normal normal 8.5px/1 'Liberation Sans', sans-serif;color:#383838;white-space:nowrap;text-decoration:underline;text-decoration-color:#8a8a8a;letter-spacing:-0.2px;">$887</div>
<div style="position:absolute;left:202.4px;top:549px;width:5px;height:1px;background:#a8a8a8;"></div>
<div style="position:absolute;left:282.4px;top:549px;width:5px;height:1px;background:#a8a8a8;"></div>
<div style="position:absolute;left:362.4px;top:549px;width:5px;height:1px;background:#a8a8a8;"></div>
<div style="position:absolute;left:385.00px;width:120px;text-align:center;top:546.00px;font:normal bold 8.5px/1 'Liberation Sans', sans-serif;color:#24ad28;white-space:nowrap;text-decoration:underline;text-decoration-color:#9ad89a;letter-spacing:-0.3px;">$887</div>
<div style="position:absolute;left:465.00px;width:120px;text-align:center;top:546.00px;font:normal normal 8.5px/1 'Liberation Sans', sans-serif;color:#383838;white-space:nowrap;text-decoration:underline;text-decoration-color:#8a8a8a;letter-spacing:-0.2px;">$2111</div>
<div style="position:absolute;left:602.4px;top:549px;width:5px;height:1px;background:#a8a8a8;"></div>
<div style="position:absolute;left:-17.00px;width:120px;text-align:center;top:558.98px;font:normal bold 6.4px/1 'Liberation Sans', sans-serif;color:#666;white-space:nowrap;letter-spacing:-0.13px;">CONVERTIBLE</div>
<svg style="position:absolute;left:0;top:0" width="640" height="571"><defs><linearGradient id="cg0" x1="0" y1="0" x2="0" y2="1"><stop offset="0" stop-color="#6585c8"/><stop offset="0.45" stop-color="#2b4a94"/><stop offset="1" stop-color="#0b153a"/></linearGradient><linearGradient id="cg1" x1="0" y1="0" x2="0" y2="1"><stop offset="0" stop-color="#5e86d0"/><stop offset="0.55" stop-color="#4572c0"/><stop offset="1" stop-color="#223e78"/></linearGradient><linearGradient id="cg2" x1="0" y1="0" x2="0" y2="1"><stop offset="0" stop-color="#aaa09a"/><stop offset="0.5" stop-color="#8e827a"/><stop offset="1" stop-color="#4e443e"/></linearGradient><linearGradient id="cg3" x1="0" y1="0" x2="0" y2="1"><stop offset="0" stop-color="#dada6a"/><stop offset="0.5" stop-color="#c6ca42"/><stop offset="1" stop-color="#7a7a28"/></linearGradient><linearGradient id="cg4" x1="0" y1="0" x2="0" y2="1"><stop offset="0" stop-color="#e0904a"/><stop offset="0.5" stop-color="#c8681e"/><stop offset="1" stop-color="#6e3408"/></linearGradient><linearGradient id="cg5" x1="0" y1="0" x2="0" y2="1"><stop offset="0" stop-color="#5a5e64"/><stop offset="0.5" stop-color="#2c2e33"/><stop offset="1" stop-color="#101114"/></linearGradient><linearGradient id="cg6" x1="0" y1="0" x2="0" y2="1"><stop offset="0" stop-color="#86aac4"/><stop offset="0.5" stop-color="#5b809c"/><stop offset="1" stop-color="#2c3c4a"/></linearGradient><linearGradient id="cg7" x1="0" y1="0" x2="0" y2="1"><stop offset="0" stop-color="#d4d4d4"/><stop offset="0.5" stop-color="#b0b0b0"/><stop offset="1" stop-color="#606060"/></linearGradient><linearGradient id="cg9" x1="0" y1="0" x2="0" y2="1"><stop offset="0" stop-color="#6a6a6a"/><stop offset="0.5" stop-color="#353535"/><stop offset="1" stop-color="#121212"/></linearGradient></defs><ellipse cx="43.00" cy="199.60" rx="14.50" ry="1.1" fill="#000" opacity="0.13"/><path d="M27.9,193.3 L30,189 L32.6,187 L41.2,186.6 L49,189.7 L56,191.8 L57.8,194 L57.3,198 L52,199.6 L44.8,199.9 L35,198.8 L28.8,197.4 Z" fill="url(#cg0)"/><path d="M30.5,189.6 L33,187.6 L41,187.3 L47.5,190.3 L32,191.2 Z" fill="#7d98d0"/><path d="M41,187.6 L47.5,190.3 L44,190.6 Z" fill="#1a2850"/><ellipse cx="29.8" cy="196.3" rx="1.9" ry="2.6" fill="#121212"/><ellipse cx="29.95" cy="196.3" rx="1.04" ry="1.43" fill="#8a8a8a"/><ellipse cx="44.5" cy="197.3" rx="2.5" ry="2.6" fill="#121212"/><ellipse cx="44.65" cy="197.3" rx="1.38" ry="1.43" fill="#8a8a8a"/><ellipse cx="43.00" cy="238.60" rx="12.00" ry="1.1" fill="#000" opacity="0.13"/><path d="M35.9,223 L46,222.8 L51.9,226.9 L54.9,230.8 L54.9,237 L38.8,238.8 L31.1,235.8 L30.8,229.9 L32.9,225.7 Z" fill="url(#cg1)"/><path d="M37,223.6 L45.4,223.5 L50.7,227.5 L37.7,227.8 Z" fill="#141a30"/><path d="M32.6,226 L36.5,224.5 L37,228 L32.2,228.8 Z" fill="#2a3a60"/><path d="M38,233.5 L54.9,232.8 L54.9,237 L38.8,238.8 Z" fill="#101218"/><ellipse cx="40.5" cy="232.6" rx="1.6" ry="0.9" fill="#dfe6f0"/><ellipse cx="33" cy="235.3" rx="2" ry="2.8" fill="#121212"/><ellipse cx="33.15" cy="235.3" rx="1.10" ry="1.54" fill="#8a8a8a"/><ellipse cx="52.4" cy="236.2" rx="2.1" ry="2.6" fill="#121212"/><ellipse cx="52.55" cy="236.2" rx="1.16" ry="1.43" fill="#8a8a8a"/><ellipse cx="43.00" cy="277.80" rx="15.50" ry="1.1" fill="#000" opacity="0.13"/><path d="M28.75,264.3 L35.9,263.2 L44.8,263.5 L51.9,267.9 L57.8,270.9 L58.7,274.4 L56,276.8 L46.6,278 L28.75,275 L27,267.9 Z" fill="url(#cg2)"/><path d="M29.9,264.6 L44.8,264 L50.1,267.9 L30.5,266.7 Z" fill="#2c2c32"/><ellipse cx="28.9" cy="273" rx="1.9" ry="2.9" fill="#121212"/><ellipse cx="29.049999999999997" cy="273" rx="1.04" ry="1.59" fill="#8a8a8a"/><ellipse cx="46" cy="275.2" rx="2.7" ry="2.8" fill="#121212"/><ellipse cx="46.15" cy="275.2" rx="1.49" ry="1.54" fill="#8a8a8a"/><ellipse cx="42.50" cy="318.20" rx="15.00" ry="1.1" fill="#000" opacity="0.13"/><path d="M29.3,301.75 L47.75,301.45 L52.5,305.9 L56.7,307.7 L57.85,312.4 L54.9,316.6 L40.6,317.8 L28.2,314.2 L27.3,306.5 Z" fill="url(#cg3)"/><path d="M37.7,301.8 L47.5,301.9 L51.3,305.9 L38.8,305.3 Z" fill="#1a1a24"/><path d="M29.9,302.6 L36.5,302.2 L37.5,305.6 L29.9,305.9 Z" fill="#30303a"/><path d="M43,312 L57.5,311.5 L55.5,315.5 L44,315.6 Z" fill="#1c1c20"/><ellipse cx="28.6" cy="312.6" rx="1.8" ry="3" fill="#121212"/><ellipse cx="28.75" cy="312.6" rx="0.99" ry="1.65" fill="#8a8a8a"/><ellipse cx="39.6" cy="315.4" rx="2.3" ry="2.6" fill="#121212"/><ellipse cx="39.75" cy="315.4" rx="1.26" ry="1.43" fill="#8a8a8a"/><ellipse cx="42.75" cy="357.20" rx="15.75" ry="1.1" fill="#000" opacity="0.13"/><path d="M27.3,346.9 L32.6,344.4 L39.5,343.4 L45.75,343.75 L51.4,346.9 L57.6,349.4 L58.9,352.5 L57,355.6 L43.9,357.5 L28.25,353.75 L26.7,350.6 Z" fill="url(#cg4)"/><path d="M30.75,345.6 L40.1,344 L48.9,346.9 L40.75,347.5 L30.75,346.9 Z" fill="#2a1c14"/><ellipse cx="29" cy="352.3" rx="2" ry="2.6" fill="#121212"/><ellipse cx="29.15" cy="352.3" rx="1.10" ry="1.43" fill="#8a8a8a"/><ellipse cx="43.9" cy="355" rx="2.6" ry="2.7" fill="#121212"/><ellipse cx="44.05" cy="355" rx="1.43" ry="1.49" fill="#8a8a8a"/><ellipse cx="42.50" cy="395.30" rx="19.50" ry="1.1" fill="#000" opacity="0.13"/><path d="M23.25,386.75 L28.5,382.6 L34.5,381.5 L44.25,381.9 L51.75,386 L60,387.9 L62.25,391.25 L60,393.9 L44.25,395.4 L24.75,393.1 L22.9,389.75 Z" fill="url(#cg5)"/><path d="M29.25,383.4 L44.25,382.25 L49.5,385.6 L28.5,385.25 Z" fill="#4a4e56"/><path d="M25,388.2 L44,387.6 L60.5,389.2 L60.5,390 L44,388.6 L25,389.2 Z" fill="#80848a" opacity="0.8"/><path d="M50,386.8 L60,388.2 L62,391.2 L60,393.5 L50,393 Z" fill="#4a4d52" opacity="0.7"/><ellipse cx="26.3" cy="391.3" rx="2" ry="3" fill="#121212"/><ellipse cx="26.45" cy="391.3" rx="1.10" ry="1.65" fill="#9a9a9a"/><ellipse cx="44.3" cy="392.5" rx="2.8" ry="3.2" fill="#121212"/><ellipse cx="44.449999999999996" cy="392.5" rx="1.54" ry="1.76" fill="#b0b0b0"/><ellipse cx="43.00" cy="436.50" rx="16.50" ry="1.1" fill="#000" opacity="0.13"/><path d="M28.9,419.75 L40.75,419.1 L49.5,419.75 L53.25,424.1 L58.9,425.4 L59.5,431.6 L57,436 L42.6,436.6 L27,433.5 L26.4,423.5 Z" fill="url(#cg6)"/><path d="M29.5,420.7 L48.9,420.7 L52.6,424.75 L29.5,424.75 Z" fill="#1c242e"/><rect x="36" y="420.5" width="0.9" height="4.3" fill="#5b809c"/><rect x="41.5" y="420.5" width="0.9" height="4.3" fill="#5b809c"/><path d="M27,432 L59.3,431.5 L57,436 L42.6,436.6 L27,433.8 Z" fill="#1a1e22" opacity="0.85"/><ellipse cx="46.5" cy="427.3" rx="1" ry="0.8" fill="#e8eef2"/><ellipse cx="44.6" cy="427.5" rx="0.7" ry="0.7" fill="#c05030"/><ellipse cx="28.3" cy="431.2" rx="2.2" ry="3.4" fill="#121212"/><ellipse cx="28.45" cy="431.2" rx="1.21" ry="1.87" fill="#8a8a8a"/><ellipse cx="42.6" cy="433" rx="2.8" ry="3.4" fill="#121212"/><ellipse cx="42.75" cy="433" rx="1.54" ry="1.87" fill="#8a8a8a"/><ellipse cx="43.50" cy="475.90" rx="15.00" ry="1.1" fill="#000" opacity="0.13"/><path d="M28.2,459.2 L37.7,457.7 L51.3,458 L54.9,462.7 L56.4,468.7 L55.5,474 L38.8,474.9 L28.2,473.4 L27.6,463.9 Z" fill="url(#cg7)"/><path d="M28.5,459.75 L34.7,459.2 L35,465.7 L28.5,466.3 Z" fill="#3c3c42"/><path d="M37.7,458.6 L51.3,458.6 L53.7,462.7 L39.4,462.7 Z" fill="#2e2e34"/><path d="M41,469.5 L56,469 L55.5,472.5 L41,473 Z" fill="#2a2a2e" opacity="0.8"/><ellipse cx="30.5" cy="472.8" rx="1.8" ry="2.5" fill="#121212"/><ellipse cx="30.65" cy="472.8" rx="0.99" ry="1.38" fill="#8a8a8a"/><ellipse cx="53.1" cy="473.4" rx="2" ry="2.5" fill="#121212"/><ellipse cx="53.25" cy="473.4" rx="1.10" ry="1.38" fill="#8a8a8a"/><ellipse cx="43.10" cy="515.30" rx="14.90" ry="1.1" fill="#000" opacity="0.13"/><g transform="translate(27.7,496.4) scale(0.9903,1.0670) translate(-28,-458.2)"><path d="M28.2,459.2 L37.7,457.7 L51.3,458 L54.9,462.7 L56.4,468.7 L55.5,474 L38.8,474.9 L28.2,473.4 L27.6,463.9 Z" fill="url(#cg7)"/><path d="M28.5,459.75 L34.7,459.2 L35,465.7 L28.5,466.3 Z" fill="#3c3c42"/><path d="M37.7,458.6 L51.3,458.6 L53.7,462.7 L39.4,462.7 Z" fill="#2e2e34"/><path d="M41,469.5 L56,469 L55.5,472.5 L41,473 Z" fill="#2a2a2e" opacity="0.8"/><ellipse cx="30.5" cy="472.8" rx="1.8" ry="2.5" fill="#121212"/><ellipse cx="30.65" cy="472.8" rx="0.99" ry="1.38" fill="#8a8a8a"/><ellipse cx="53.1" cy="473.4" rx="2" ry="2.5" fill="#121212"/><ellipse cx="53.25" cy="473.4" rx="1.10" ry="1.38" fill="#8a8a8a"/></g><ellipse cx="42.75" cy="552.20" rx="16.75" ry="1.1" fill="#000" opacity="0.13"/><path d="M26.4,543 L31.4,539.25 L35.1,537.4 L42.6,538 L50.1,541.75 L57.6,544.25 L59.5,548 L56.4,551.1 L40.75,552.4 L27,549.9 Z" fill="url(#cg9)"/><path d="M32,540 L35.5,538.2 L42.3,538.7 L48.5,541.9 L34,542.6 Z" fill="#0c0c0c"/><path d="M44,544.5 L57,545 L57.5,547 L45,546.5 Z" fill="#7a7a7a" opacity="0.7"/><path d="M35.5,538 L42.5,538.6 L49.5,542" stroke="#9a9a9a" stroke-width="0.7" fill="none"/><path d="M31,543.5 L44,544 L56,546" stroke="#6a6a6a" stroke-width="0.6" fill="none"/><ellipse cx="28.9" cy="548" rx="1.9" ry="2.8" fill="#121212"/><ellipse cx="29.049999999999997" cy="548" rx="1.04" ry="1.54" fill="#808080"/><ellipse cx="40.75" cy="549.7" rx="2.5" ry="2.7" fill="#121212"/><ellipse cx="40.9" cy="549.7" rx="1.38" ry="1.49" fill="#8a8a8a"/></svg></body></html>
